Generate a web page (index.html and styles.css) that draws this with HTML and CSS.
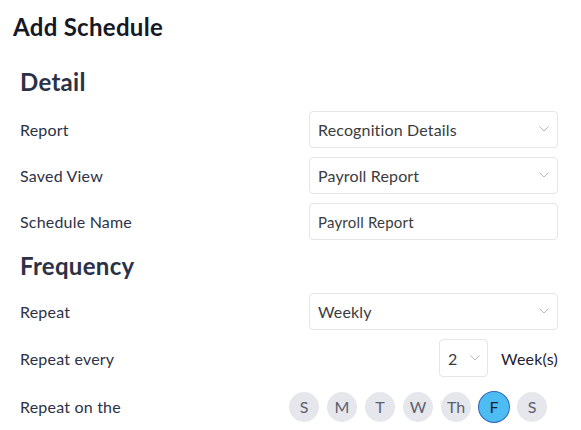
FILE: index.html
```html
<!DOCTYPE html>
<html lang="en">
<head>
<meta charset="utf-8">
<title>Add Schedule</title>
<link rel="stylesheet" href="styles.css">
</head>
<body>
<div class="page">
  <h1 class="title">Add Schedule</h1>

  <h2 class="section section-detail">Detail</h2>
  <div class="rows">
    <div class="row">
      <span class="label">Report</span>
      <div class="select">
        <span class="value">Recognition Details</span>
        <svg class="chev" width="10" height="6" viewBox="0 0 10 6"><polyline points="0.5,0.5 5,5 9.5,0.5" fill="none" stroke="#b3b8cc" stroke-width="1"/></svg>
      </div>
    </div>
    <div class="row">
      <span class="label">Saved View</span>
      <div class="select">
        <span class="value">Payroll Report</span>
        <svg class="chev" width="10" height="6" viewBox="0 0 10 6"><polyline points="0.5,0.5 5,5 9.5,0.5" fill="none" stroke="#b3b8cc" stroke-width="1"/></svg>
      </div>
    </div>
    <div class="row">
      <span class="label">Schedule Name</span>
      <div class="select input">
        <span class="value">Payroll Report</span>
      </div>
    </div>
  </div>

  <h2 class="section section-freq">Frequency</h2>
  <div class="rows">
    <div class="row">
      <span class="label">Repeat</span>
      <div class="select">
        <span class="value">Weekly</span>
        <svg class="chev" width="10" height="6" viewBox="0 0 10 6"><polyline points="0.5,0.5 5,5 9.5,0.5" fill="none" stroke="#b3b8cc" stroke-width="1"/></svg>
      </div>
    </div>
    <div class="row">
      <span class="label">Repeat every</span>
      <div class="every">
        <div class="select small">
          <span class="value">2</span>
          <svg class="chev" width="10" height="6" viewBox="0 0 10 6"><polyline points="0.5,0.5 5,5 9.5,0.5" fill="none" stroke="#b3b8cc" stroke-width="1"/></svg>
        </div>
        <span class="unit">Week(s)</span>
      </div>
    </div>
    <div class="row row-days">
      <span class="label">Repeat on the</span>
      <div class="days">
        <span class="day">S</span>
        <span class="day">M</span>
        <span class="day">T</span>
        <span class="day">W</span>
        <span class="day">Th</span>
        <span class="day active">F</span>
        <span class="day">S</span>
      </div>
    </div>
  </div>
</div>
</body>
</html>
```

FILE: styles.css
```css
html, body {
  margin: 0;
  padding: 0;
  background: #ffffff;
}

body {
  font-family: "Lato", "Noto Sans", sans-serif;
  color: #2d3246;
}

.page {
  padding: 13px 23px 0 20px;
}

.title {
  margin: 0 0 0 -7px;
  font-size: 24px;
  line-height: 28px;
  letter-spacing: 0.3px;
  font-weight: 700;
  color: #161925;
}

.section {
  margin: 0;
  font-size: 24px;
  line-height: 28px;
  letter-spacing: 0.3px;
  font-weight: 700;
  color: #2b3146;
}

.section-detail {
  margin-top: 27px;
  margin-bottom: 15px;
}

.section-freq {
  margin-top: 12px;
  margin-bottom: 13px;
}

.rows {
  display: flex;
  flex-direction: column;
  gap: 9px;
}

.row {
  display: flex;
  align-items: center;
  justify-content: space-between;
  min-height: 37px;
}

.label {
  font-size: 16px;
  letter-spacing: 0.2px;
  color: #2d3246;
}

.select {
  box-sizing: border-box;
  width: 249px;
  height: 37px;
  border: 1px solid #e3e5ea;
  border-radius: 4px;
  display: flex;
  align-items: center;
  justify-content: space-between;
  padding: 0 8px 0 8px;
  background: #fff;
}

.value {
  font-size: 16px;
  letter-spacing: 0.15px;
  color: #3a3b40;
}

.input .value {
  font-size: 15px;
  letter-spacing: 0.2px;
}

.chev {
  display: block;
  margin-top: -1px;
}

.every {
  display: flex;
  align-items: center;
  gap: 13px;
}

.select.small {
  width: 49px;
  height: 38px;
  padding: 0 7px 0 8px;
}

.unit {
  font-size: 16px;
  letter-spacing: 0.2px;
  color: #1e2130;
}

.row-days {
  margin-top: 2px;
}

.days {
  display: flex;
  gap: 8px;
  padding-right: 11px;
}

.day {
  width: 30px;
  height: 30px;
  border-radius: 50%;
  background: #e6e7ec;
  color: #5b5f70;
  font-size: 16px;
  display: flex;
  align-items: center;
  justify-content: center;
}

.day.active {
  background: #4dbcf2;
  color: #1b1f2b;
  box-shadow: 0 0 0 1px #2f64b8;
}
```
